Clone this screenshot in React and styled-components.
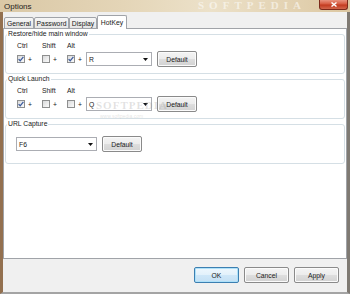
import React from 'react';
import styled, { createGlobalStyle } from 'styled-components';

const GlobalStyle = createGlobalStyle`
  html, body {
    margin: 0;
    padding: 0;
    background: #ffffff;
  }
  #root {
    width: 350px;
    height: 294px;
  }
  * {
    box-sizing: border-box;
  }
`;

const Window = styled.div`
  width: 350px;
  height: 294px;
  display: flex;
  flex-direction: column;
  overflow: hidden;
  font-family: 'Liberation Sans', Arial, sans-serif;
  font-size: 6.8px;
  color: #1a1a1a;
`;

const TitleBar = styled.div`
  position: relative;
  height: 12px;
  flex: none;
  display: flex;
  align-items: flex-start;
  justify-content: space-between;
  padding-left: 4px;
  background: linear-gradient(to right, #dac8a6 0%, #e4d5b7 35%, #ece1c9 60%, #dcc7a1 100%);
`;

const TitleText = styled.span`
  font-size: 8px;
  line-height: 13px;
  color: #1c1c1c;
`;

const TitleMark = styled.span`
  position: absolute;
  left: 198px;
  top: 0;
  font-family: 'Liberation Serif', 'Times New Roman', serif;
  font-weight: 700;
  font-size: 11px;
  line-height: 11px;
  letter-spacing: 5px;
  color: rgba(255, 255, 255, 0.55);
  pointer-events: none;
`;

const CloseButton = styled.div`
  width: 29px;
  height: 10px;
  margin-right: 2px;
  display: flex;
  align-items: center;
  justify-content: center;
  border: 1px solid #7c2a1b;
  border-top: none;
  border-radius: 0 0 3px 3px;
  background: linear-gradient(#e8937f 0%, #d65a40 45%, #c23a20 55%, #d2664c 100%);
`;

const Frame = styled.div`
  flex: 1;
  display: flex;
  border-left: 3px solid #93704f;
  border-right: 3px solid #7f7a73;
  border-bottom: 2px solid #a4a4a4;
`;

const Client = styled.div`
  flex: 1;
  display: flex;
  flex-direction: column;
  padding-top: 3px;
  background: #f0f0f0;
`;

const TabStrip = styled.div`
  height: 14px;
  flex: none;
  display: flex;
  align-items: flex-end;
  padding-left: 1px;
  margin-bottom: -1px;
`;

const Tab = styled.div`
  position: relative;
  z-index: 1;
  width: ${({ $w }) => $w}px;
  height: ${({ $active }) => ($active ? 14 : 12)}px;
  display: flex;
  align-items: center;
  justify-content: center;
  padding-bottom: ${({ $active }) => ($active ? 1 : 0)}px;
  border: 1px solid #a0a3a8;
  border-bottom: ${({ $active }) => ($active ? 'none' : '1px solid #a0a3a8')};
  border-radius: 2px 2px 0 0;
  background: ${({ $active }) =>
    $active ? '#ffffff' : 'linear-gradient(#f6f6f6, #e5e5e5)'};
`;

const Panel = styled.div`
  position: relative;
  flex: 1;
  display: flex;
  flex-direction: column;
  gap: 1px;
  padding: 1px;
  background: #ffffff;
  border: 1px solid #a0a3a8;
`;

const Group = styled.fieldset`
  margin: 0;
  min-width: 0;
  padding: 0 0 0 1px;
  border: 1px solid #d5dfe5;
  border-radius: 3px;
`;

const GroupTitle = styled.legend`
  padding: 0 1px;
  font-size: 6.8px;
  line-height: 8px;
`;

const HotkeyGrid = styled.div`
  display: grid;
  grid-template-columns: 25px 25px 19px 71px 40px;
  grid-template-rows: 8px 16px;
  row-gap: 1px;
  align-items: center;
  padding: 4px 0 6px 10px;
`;

const KeyLabel = styled.span`
  line-height: 8px;
`;

const KeyCheck = styled.div`
  display: flex;
  align-items: center;
  gap: 3px;
`;

const Box = styled.div`
  width: 8px;
  height: 8px;
  display: flex;
  align-items: center;
  justify-content: center;
  border: 1px solid #8e8f8f;
  background: linear-gradient(135deg, #d9dadb, #fbfbfb);
`;

const CaptureRow = styled.div`
  display: flex;
  align-items: center;
  gap: 5px;
  height: 16px;
  margin: 8px 0 11px 9px;
`;

const Combo = styled.div`
  width: ${({ $w }) => $w}px;
  height: 14px;
  display: flex;
  align-items: center;
  justify-content: space-between;
  padding: 0 3px 0 2px;
  border: 1px solid #abadb3;
  background: #ffffff;
`;

const Button = styled.div`
  width: ${({ $w }) => $w}px;
  height: 16px;
  display: flex;
  align-items: center;
  justify-content: center;
  border: 1px solid ${({ $primary }) => ($primary ? '#3c7fb1' : '#8a8a8a')};
  border-radius: 2px;
  background: ${({ $primary }) =>
    $primary
      ? 'linear-gradient(#eef7fd 0%, #e2f1fb 50%, #cfe7f8 50%, #c4e0f4 100%)'
      : 'linear-gradient(#f4f4f4 0%, #ececec 50%, #dedede 50%, #d2d2d2 100%)'};
  box-shadow: ${({ $primary }) => ($primary ? 'inset 0 0 0 1px #aee1f9' : 'inset 0 0 0 1px #fbfbfb')};
`;

const Footer = styled.div`
  height: 33px;
  flex: none;
  display: flex;
  justify-content: flex-end;
  align-items: flex-start;
  gap: 5px;
  padding: 8px 8px 0 0;
`;

const Mark = styled.span`
  position: absolute;
  left: ${({ $x }) => $x}px;
  top: ${({ $y }) => $y}px;
  font-family: ${({ $serif }) => ($serif ? "'Liberation Serif', serif" : "'Liberation Sans', sans-serif")};
  font-weight: ${({ $serif }) => ($serif ? 700 : 400)};
  font-size: ${({ $size }) => $size}px;
  line-height: 1;
  letter-spacing: ${({ $serif }) => ($serif ? 1 : 0)}px;
  color: rgba(150, 150, 150, 0.28);
  pointer-events: none;
`;

const Tick = () => (
  <svg width="6" height="6" viewBox="0 0 6 6">
    <path d="M0.6 3.1 L2.2 4.8 L5.4 0.9" fill="none" stroke="#3d5c9e" strokeWidth="1.3" />
  </svg>
);

const Arrow = () => (
  <svg width="5" height="3" viewBox="0 0 5 3">
    <path d="M0 0 H5 L2.5 3 Z" fill="#111" />
  </svg>
);

const CloseX = () => (
  <svg width="6" height="5" viewBox="0 0 6 5">
    <path d="M0.5 0.5 L5.5 4.5 M5.5 0.5 L0.5 4.5" stroke="#fff" strokeWidth="1.4" />
  </svg>
);

const Check = ({ checked }) => (
  <KeyCheck>
    <Box>{checked && <Tick />}</Box>
    <span>+</span>
  </KeyCheck>
);

const HotkeyGroup = ({ title, ctrl, shift, alt, keyName }) => (
  <Group>
    <GroupTitle>{title}</GroupTitle>
    <HotkeyGrid>
      <KeyLabel>Ctrl</KeyLabel>
      <KeyLabel>Shift</KeyLabel>
      <KeyLabel>Alt</KeyLabel>
      <span />
      <span />
      <Check checked={ctrl} />
      <Check checked={shift} />
      <Check checked={alt} />
      <Combo $w={66}>
        <span>{keyName}</span>
        <Arrow />
      </Combo>
      <Button $w={40}>Default</Button>
    </HotkeyGrid>
  </Group>
);

const tabs = [
  { label: 'General', w: 30 },
  { label: 'Password', w: 35 },
  { label: 'Display', w: 28 },
  { label: 'HotKey', w: 30, active: true },
];

export default function App() {
  return (
    <>
      <GlobalStyle />
      <Window>
        <TitleBar>
          <TitleText>Options</TitleText>
          <TitleMark>SOFTPEDIA</TitleMark>
          <CloseButton>
            <CloseX />
          </CloseButton>
        </TitleBar>
        <Frame>
          <Client>
            <TabStrip>
              {tabs.map((t) => (
                <Tab key={t.label} $w={t.w} $active={t.active}>
                  {t.label}
                </Tab>
              ))}
            </TabStrip>
            <Panel>
              <HotkeyGroup title="Restore/hide main window" ctrl alt keyName="R" />
              <HotkeyGroup title="Quick Launch" ctrl keyName="Q" />
              <Group>
                <GroupTitle>URL Capture</GroupTitle>
                <CaptureRow>
                  <Combo $w={81}>
                    <span>F6</span>
                    <Arrow />
                  </Combo>
                  <Button $w={40}>Default</Button>
                </CaptureRow>
              </Group>
              <Mark $serif $x={92} $y={71} $size={11}>SOFTPEDIA</Mark>
              <Mark $x={96} $y={85} $size={5}>www.softpedia.com</Mark>
            </Panel>
            <Footer>
              <Button $w={45} $primary>OK</Button>
              <Button $w={45}>Cancel</Button>
              <Button $w={45}>Apply</Button>
            </Footer>
          </Client>
        </Frame>
      </Window>
    </>
  );
}
